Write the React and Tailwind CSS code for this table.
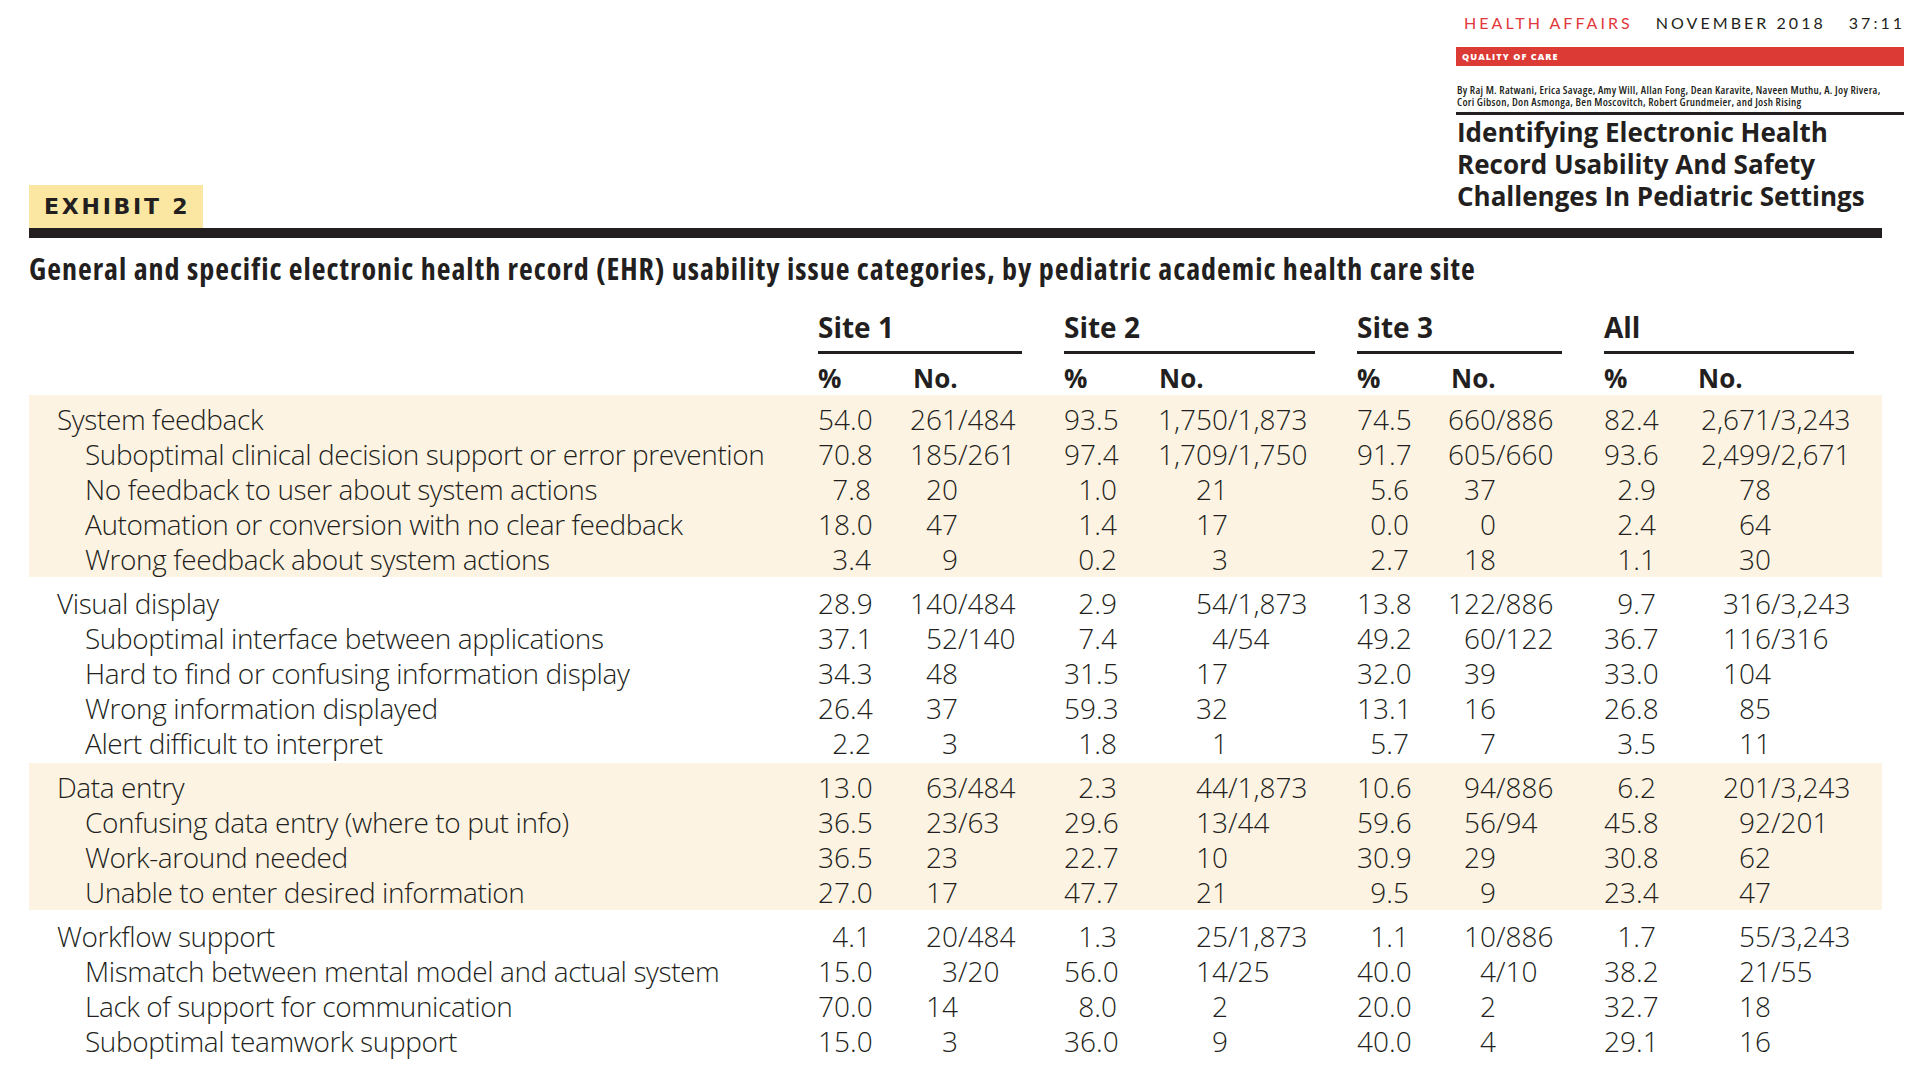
import React from 'react';

// Exhibit 2 table: general and specific EHR usability issue categories by site
const groups = [
  {
    shaded: true,
    rows: [
      ['System feedback', false, ['54.0', '261/484'], ['93.5', '1,750/1,873'], ['74.5', '660/886'], ['82.4', '2,671/3,243']],
      ['Suboptimal clinical decision support or error prevention', true, ['70.8', '185/261'], ['97.4', '1,709/1,750'], ['91.7', '605/660'], ['93.6', '2,499/2,671']],
      ['No feedback to user about system actions', true, ['7.8', '20'], ['1.0', '21'], ['5.6', '37'], ['2.9', '78']],
      ['Automation or conversion with no clear feedback', true, ['18.0', '47'], ['1.4', '17'], ['0.0', '0'], ['2.4', '64']],
      ['Wrong feedback about system actions', true, ['3.4', '9'], ['0.2', '3'], ['2.7', '18'], ['1.1', '30']],
    ],
  },
  {
    shaded: false,
    rows: [
      ['Visual display', false, ['28.9', '140/484'], ['2.9', '54/1,873'], ['13.8', '122/886'], ['9.7', '316/3,243']],
      ['Suboptimal interface between applications', true, ['37.1', '52/140'], ['7.4', '4/54'], ['49.2', '60/122'], ['36.7', '116/316']],
      ['Hard to find or confusing information display', true, ['34.3', '48'], ['31.5', '17'], ['32.0', '39'], ['33.0', '104']],
      ['Wrong information displayed', true, ['26.4', '37'], ['59.3', '32'], ['13.1', '16'], ['26.8', '85']],
      ['Alert difficult to interpret', true, ['2.2', '3'], ['1.8', '1'], ['5.7', '7'], ['3.5', '11']],
    ],
  },
  {
    shaded: true,
    rows: [
      ['Data entry', false, ['13.0', '63/484'], ['2.3', '44/1,873'], ['10.6', '94/886'], ['6.2', '201/3,243']],
      ['Confusing data entry (where to put info)', true, ['36.5', '23/63'], ['29.6', '13/44'], ['59.6', '56/94'], ['45.8', '92/201']],
      ['Work-around needed', true, ['36.5', '23'], ['22.7', '10'], ['30.9', '29'], ['30.8', '62']],
      ['Unable to enter desired information', true, ['27.0', '17'], ['47.7', '21'], ['9.5', '9'], ['23.4', '47']],
    ],
  },
  {
    shaded: false,
    rows: [
      ['Workflow support', false, ['4.1', '20/484'], ['1.3', '25/1,873'], ['1.1', '10/886'], ['1.7', '55/3,243']],
      ['Mismatch between mental model and actual system', true, ['15.0', '3/20'], ['56.0', '14/25'], ['40.0', '4/10'], ['38.2', '21/55']],
      ['Lack of support for communication', true, ['70.0', '14'], ['8.0', '2'], ['20.0', '2'], ['32.7', '18']],
      ['Suboptimal teamwork support', true, ['15.0', '3'], ['36.0', '9'], ['40.0', '4'], ['29.1', '16']],
    ],
  },
];

const sites = [
  { name: 'Site 1', line: 'w-[204px]' },
  { name: 'Site 2', line: 'w-[251px]' },
  { name: 'Site 3', line: 'w-[205px]' },
  { name: 'All', line: 'w-[250px]' },
];

const gridCols =
  'grid grid-cols-[789px_53px_87px_106px_53px_111px_129px_52px_87px_108px_52px_115px_1fr]';

const TableRow = ({ label, sub, cells }) => (
  <div className={`${gridCols} h-[35px] leading-[35px]`}>
    <div className={`tracking-[-0.4px] ${sub ? 'pl-[56px]' : 'pl-[28px]'}`}>{label}</div>
    {cells.map(([pct, no], i) => {
      const [num, den] = no.split('/');
      return (
        <React.Fragment key={i}>
          <div className="text-right">{pct}</div>
          <div className="text-right">{num}</div>
          <div>{den ? `/${den}` : ''}</div>
        </React.Fragment>
      );
    })}
  </div>
);

const App = () => {
  return (
    <div className="min-h-[1080px] w-[1920px] overflow-hidden bg-white text-[#231f20]">
      <div className="ml-[29px] w-[1853px]">
        {/* Top: exhibit label and journal header */}
        <div className="flex items-end justify-between">
          <div className="h-[43px] bg-[#fbe7a1] pl-[15px] pr-[13px] font-['DejaVu_Sans',sans-serif] text-[22px] font-bold leading-[43px] tracking-[0.125em]">
            EXHIBIT 2
          </div>

          <div className="mr-[-22px] mb-[16px] w-[448px] shrink-0 pt-[13px]">
            <div className="flex gap-[23px] whitespace-nowrap pl-[8px] font-['Lato',sans-serif] text-[16px] leading-[20px] tracking-[0.19em]">
              <span className="shrink-0 text-[#e2373b]">HEALTH AFFAIRS</span>
              <span className="shrink-0">NOVEMBER 2018</span>
              <span className="shrink-0">37:11</span>
            </div>
            <div className="mt-[14px] flex h-[19px] items-center bg-[#dc3a35] pl-[6px] font-['Open_Sans',sans-serif] text-[9px] font-extrabold tracking-[0.12em] text-white">
              QUALITY OF CARE
            </div>
            <div className="mt-[18px] whitespace-nowrap pl-[1px] font-['Open_Sans',sans-serif] text-[11px] font-semibold leading-[12px] tracking-[0.3px] [font-stretch:75%]">
              <div>By Raj M. Ratwani, Erica Savage, Amy Will, Allan Fong, Dean Karavite, Naveen Muthu, A. Joy Rivera,</div>
              <div>Cori Gibson, Don Asmonga, Ben Moscovitch, Robert Grundmeier, and Josh Rising</div>
            </div>
            <div className="mt-[4px] h-[3px] bg-[#231f20]" />
            <h1 className="mt-[1px] pl-[1px] font-['Open_Sans',sans-serif] text-[26px] font-bold leading-[32px]">
              <div>Identifying Electronic Health</div>
              <div>Record Usability And Safety</div>
              <div>Challenges In Pediatric Settings</div>
            </h1>
          </div>
        </div>

        <div className="h-[10px] bg-[#231f20]" />

        <h2 className="mt-[13px] font-['Open_Sans',sans-serif] text-[30px] font-bold leading-[36px] tracking-[1px] [font-stretch:75%]">
          General and specific electronic health record (EHR) usability issue categories, by pediatric academic health care site
        </h2>

        {/* Column headers */}
        <div className={`${gridCols} mt-[23px] font-['Open_Sans',sans-serif] font-bold`}>
          <div />
          {sites.map((s) => (
            <div key={s.name} className="col-span-3">
              <div className="text-[28px] leading-[35px]">{s.name}</div>
              <div className={`mt-[6px] h-[3px] bg-[#231f20] ${s.line}`} />
            </div>
          ))}
        </div>
        <div className={`${gridCols} mt-[9px] font-['Open_Sans',sans-serif] text-[26px] font-bold leading-[30px]`}>
          <div />
          {sites.map((s) => (
            <React.Fragment key={s.name}>
              <div>%</div>
              <div className="col-span-2 pl-[42px]">No.</div>
            </React.Fragment>
          ))}
        </div>

        {/* Body */}
        <div className="mt-[2px] font-['Open_Sans',sans-serif] text-[28px] font-light">
          {groups.map((g, gi) => (
            <div key={gi} className={`pt-[7px] ${gi > 0 ? 'mt-[2px]' : ''} ${g.shaded ? 'bg-[#fdf3e3]' : ''}`}>
              {g.rows.map(([label, sub, ...cells]) => (
                <TableRow key={label} label={label} sub={sub} cells={cells} />
              ))}
            </div>
          ))}
        </div>
      </div>
    </div>
  );
};

export default App;
